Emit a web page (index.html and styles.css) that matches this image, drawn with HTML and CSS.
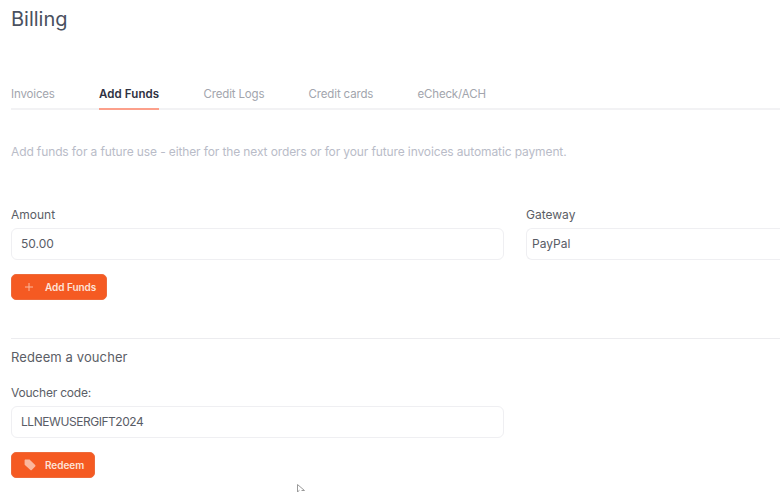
FILE: index.html
```html
<!DOCTYPE html>
<html lang="en">
<head>
    <meta charset="UTF-8">
    <meta name="viewport" content="width=device-width, initial-scale=1.0">
    <title>Billing</title>
    <link rel="stylesheet" href="styles.css">
</head>
<body>
    <div class="page">
        <h1>Billing</h1>

        <!-- Tabs -->
        <div class="tabs">
            <a class="tab">Invoices</a>
            <a class="tab active">Add Funds</a>
            <a class="tab">Credit Logs</a>
            <a class="tab">Credit cards</a>
            <a class="tab">eCheck/ACH</a>
        </div>

        <p class="intro">Add funds for a future use - either for the next orders or for your future invoices automatic payment.</p>

        <!-- Add funds form -->
        <div class="form-row">
            <div class="field">
                <label>Amount</label>
                <div class="input">50.00</div>
            </div>
            <div class="field">
                <label>Gateway</label>
                <div class="input select">PayPal</div>
            </div>
        </div>
        <button class="btn btn-funds">
            <svg class="btn-icon" viewBox="0 0 10 10"><path d="M5 1v8M1 5h8" fill="none" stroke="currentColor" stroke-width="1"/></svg>
            Add Funds
        </button>

        <hr class="divider">

        <!-- Voucher -->
        <h2>Redeem a voucher</h2>
        <div class="field voucher">
            <label>Voucher code:</label>
            <div class="input code">LLNEWUSERGIFT2024</div>
        </div>
        <button class="btn btn-redeem">
            <svg class="btn-icon tag" viewBox="0 0 12 12"><path d="M.6 1.6C.6 1 1 .6 1.6.6h3.7c.3 0 .5.1.7.3l5.2 5.2c.4.4.4 1 0 1.4l-3.4 3.4c-.4.4-1 .4-1.4 0L.9 6c-.2-.2-.3-.4-.3-.7z" fill="currentColor"/></svg>
            Redeem
        </button>
    </div>

    <svg class="cursor" viewBox="0 0 9 9"><path d="M.5.5V8l2-1.800M.5.5l7 6h-3" fill="none" stroke="#9a9a9a" stroke-width="1"/></svg>
</body>
</html>
```

FILE: styles.css
```css
/* Global Styles */
body {
    margin: 0;
    font-family: 'Inter', 'Roboto', sans-serif;
    background: #ffffff;
    color: #55585f;
    overflow: hidden;
    height: 492px;
    position: relative;
}

.page {
    padding: 7px 0 0 11px;
}

h1 {
    margin: 0;
    font-size: 20px;
    line-height: 24px;
    font-weight: 400;
    color: #4a5160;
}

/* Tabs */
.tabs {
    display: flex;
    gap: 44.2px;
    margin-top: 54px;
    height: 23px;
    border-bottom: 2px solid #f2f2f4;
}

.tab {
    font-size: 11.5px;
    letter-spacing: -0.15px;
    line-height: 19px;
    color: #a2a5ad;
    height: 23px;
}

.tab.active {
    color: #2f3142;
    font-weight: 600;
    letter-spacing: 0.1px;
    border-bottom: 2px solid #fca08b;
}

.intro {
    margin: 34px 0 0;
    font-size: 12px;
    letter-spacing: -0.12px;
    line-height: 16px;
    color: #b9bcc8;
}

/* Form */
.form-row {
    display: grid;
    grid-template-columns: 493px 1fr;
    gap: 22px;
    margin-top: 47px;
}

.field label {
    display: block;
    font-size: 12px;
    line-height: 16px;
    color: #5b5e66;
    margin-bottom: 5px;
}

.input {
    box-sizing: border-box;
    height: 32px;
    padding: 0 9px;
    border: 1px solid #efeff2;
    border-radius: 6px;
    font-size: 12px;
    line-height: 30px;
    color: #595c66;
}

/* runs off the right of the window */
.input.select {
    padding-left: 5px;
    border-right: 0;
    border-radius: 6px 0 0 6px;
}

.input.code {
    letter-spacing: -0.45px;
}

.btn {
    display: flex;
    align-items: center;
    height: 26px;
    margin-top: 14px;
    padding: 0 0 0 12px;
    background: #f55a22;
    border: 1px solid #ee6a3a;
    border-radius: 5px;
    color: #fde3d8;
    font-family: inherit;
    font-size: 10px;
    font-weight: 600;
    letter-spacing: -0.05px;
}

.btn-funds {
    width: 96px;
}

.btn-redeem {
    width: 84px;
}

.btn-icon {
    width: 10px;
    height: 10px;
    margin-right: 11px;
    color: #fbb79d;
}

.btn-icon.tag {
    width: 12px;
    height: 12px;
    margin-right: 9px;
}

.divider {
    border: 0;
    border-top: 1px solid #ececef;
    margin: 38px 0 0;
}

h2 {
    margin: 10px 0 0;
    font-size: 13px;
    letter-spacing: 0.1px;
    line-height: 16px;
    font-weight: 400;
    color: #5b5e66;
}

.voucher {
    width: 493px;
    margin-top: 20px;
}

.voucher label {
    letter-spacing: -0.2px;
}

/* Stray mouse pointer from the capture */
.cursor {
    position: absolute;
    left: 297px;
    top: 484px;
    width: 9px;
    height: 9px;
}
```
